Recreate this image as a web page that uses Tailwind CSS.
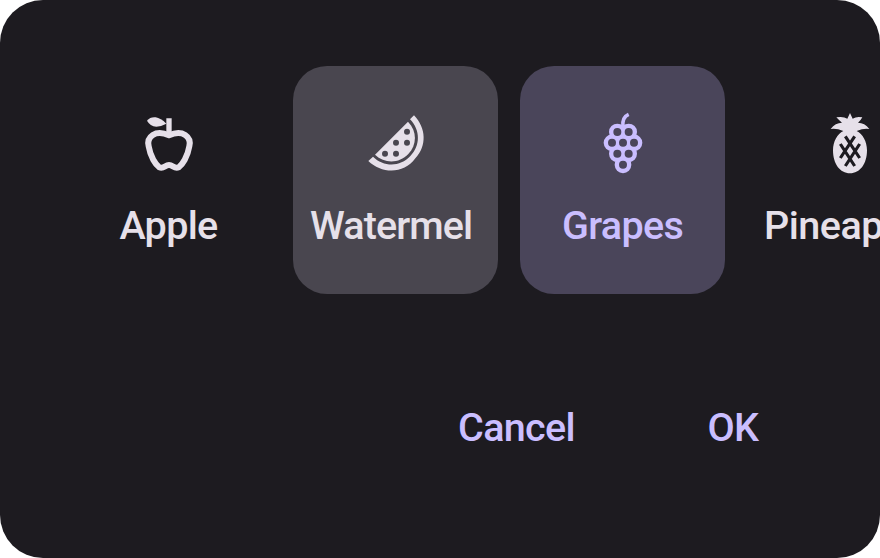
<!DOCTYPE html>
<html lang="en">
<head>
<meta charset="utf-8">
<title>Choose a fruit</title>
<script src="https://cdn.jsdelivr.net/npm/@tailwindcss/browser@4"></script>
</head>
<body class="bg-white font-['Roboto',sans-serif]">
<main class="w-[880px] h-[558px] rounded-[43px] bg-[#1d1b20] overflow-hidden pt-[66px] pl-[66px] text-[39.5px] leading-[46px] font-medium tracking-[-0.65px]">
  <div class="flex gap-[22px] w-max text-[#e6e0e9]">
    <button class="w-[205px] h-[228px] rounded-[34px] flex flex-col items-center pt-[34px]">
      <svg class="size-20 shrink-0" viewBox="-3 0 240 240" fill="none">
        <path d="M117 106C76 87 49 111 56 139C61 170 77 194 88 202C101 208 105 195 117 195C129 195 133 208 146 202C157 194 173 170 178 139C185 111 158 87 117 106Z" stroke="currentColor" stroke-width="18" stroke-linejoin="round"/>
        <path d="M109 55H125V103H109Z" fill="currentColor"/>
        <path d="M51 62Q61 50 77 52Q92 54 109 71Q95 79 79 80Q60 78 51 62Z" fill="currentColor"/>
      </svg>
      <span class="mt-[23px]">Apple</span>
    </button>
    <button class="w-[205px] h-[228px] rounded-[34px] bg-[#49464f] flex flex-col items-center pt-[34px]">
      <svg class="size-20 shrink-0" viewBox="0 0 240 240" fill="none">
        <path d="M174 46C211 84 213 139 178 175C143 224 76 221 37 183L51 170C83 201 132 202 163 168C193 138 194 91 162 58Z" fill="currentColor"/>
        <path d="M156 65C184 94 183 134 157 162C129 191 86 192 57 164Z" fill="currentColor"/>
        <g fill="#49464f"><circle cx="153" cy="95.500" r="9"/><circle cx="120" cy="128.500" r="9"/><circle cx="153" cy="128.500" r="9"/><circle cx="87" cy="161.500" r="9"/><circle cx="120" cy="161.500" r="9"/></g>
      </svg>
      <span class="mt-[23px] w-[171px] text-left whitespace-nowrap tracking-[-0.9px]">Watermel</span>
    </button>
    <button class="w-[205px] h-[228px] rounded-[34px] bg-[#4a455a] text-[#cabeff] flex flex-col items-center pt-[34px]">
      <svg class="size-20 shrink-0" viewBox="0 0 240 240" fill="none">
        <path d="M120 80C118 64 123 49 137 43" stroke="currentColor" stroke-width="11"/>
        <g fill="currentColor"><circle cx="103" cy="96" r="25"/><circle cx="137" cy="96" r="25"/><circle cx="87" cy="128.500" r="25"/><circle cx="120" cy="128.500" r="25"/><circle cx="153" cy="128.500" r="25"/><circle cx="103" cy="161.500" r="25"/><circle cx="137" cy="161.500" r="25"/><circle cx="120" cy="194.500" r="25"/></g>
        <g fill="#4a455a"><circle cx="103" cy="96" r="12"/><circle cx="137" cy="96" r="12"/><circle cx="87" cy="128.500" r="12"/><circle cx="120" cy="128.500" r="12"/><circle cx="153" cy="128.500" r="12"/><circle cx="103" cy="161.500" r="12"/><circle cx="137" cy="161.500" r="12"/><circle cx="120" cy="194.500" r="12"/></g>
      </svg>
      <span class="mt-[23px]">Grapes</span>
    </button>
    <button class="w-[205px] h-[228px] rounded-[34px] flex flex-col items-center pt-[34px]">
      <svg class="size-20 shrink-0" viewBox="30 0 240 240" fill="none">
        <path d="M150 39L158 56Q170 48 187 52Q182 62 174 68Q194 68 208 87Q191 84 170 93C188 101 201 125 201 151C201 192 180 220 150 220C120 220 99 192 99 151C99 125 112 101 130 93Q109 84 92 87Q106 68 126 68Q118 62 109 52Q130 48 142 56Z" fill="currentColor"/>
        <path d="M136 109L179 174M164 109L121 174M121 132L164 198M179 132L136 198" stroke="#1d1b20" stroke-width="9.500"/>
      </svg>
      <span class="mt-[23px] tracking-[-0.5px]">Pineapple</span>
    </button>
  </div>
  <div class="mt-[111px] ml-[392px] flex gap-[132.500px] text-[#cabeff]">
    <button>Cancel</button>
    <button>OK</button>
  </div>
</main>
</body>
</html>
